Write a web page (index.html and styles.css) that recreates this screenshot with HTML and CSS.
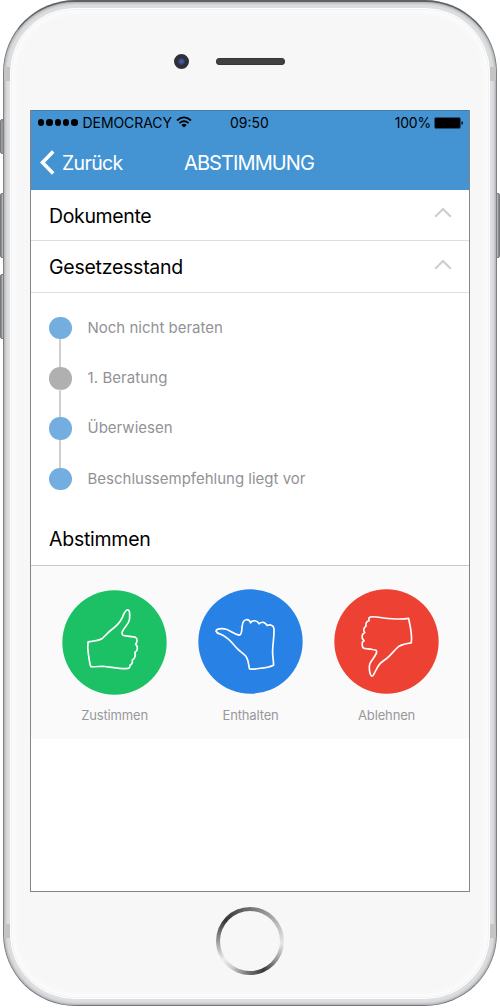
FILE: index.html
```html
<!DOCTYPE html>
<html lang="de">
<head>
<meta charset="utf-8">
<title>Abstimmung</title>
<link rel="stylesheet" href="styles.css">
</head>
<body>
<div class="device">
  <i class="key mute"></i><i class="key vol-up"></i><i class="key vol-down"></i><i class="key power"></i>
  <div class="shell">
    <i class="band tl"></i><i class="band tr"></i><i class="band bl"></i><i class="band br"></i>
    <div class="face">
      <div class="top-bezel"><i class="camera"></i><i class="speaker"></i></div>
      <main class="screen">
        <header class="header">
          <div class="status">
            <div class="carrier">
              <div class="signal"><i></i><i></i><i></i><i></i><i></i></div>
              <span class="carrier-name">DEMOCRACY</span>
              <svg class="wifi" viewBox="0 0 16 12" width="16" height="12"><g fill="none" stroke="#000" stroke-width="1.8"><path d="M1 4.5Q8-1.8 15 4.5"/><path d="M3.4 7.2Q8 3.1 12.6 7.2"/></g><path d="M5.3 9Q8 6.7 10.7 9L8 11.6z"/></svg>
            </div>
            <span class="clock">09:50</span>
            <div class="power-state"><span class="percent">100%</span><svg class="battery" viewBox="0 0 29 12" width="29" height="12"><rect x=".5" y=".5" width="26" height="11" rx="1.7" fill="#000" stroke="#235073"/><path d="M27.5 4Q29 4.4 29 6T27.5 8z"/></svg></div>
          </div>
          <nav class="nav">
            <svg class="back-icon" viewBox="0 0 15 25" width="15" height="25"><path d="M13.2 1.5 2.5 12.5l10.7 11" fill="none" stroke="#fff" stroke-width="3.6"/></svg>
            <span class="back">Zurück</span>
            <h1 class="title">ABSTIMMUNG</h1>
          </nav>
        </header>
        <section class="row"><h2 class="heading documents">Dokumente</h2><svg class="chevron" viewBox="0 0 18 11" width="18" height="11"><path d="M1.2 9.7 9 2l7.8 7.7"/></svg></section>
        <section class="row second"><h2 class="heading law">Gesetzesstand</h2><svg class="chevron" viewBox="0 0 18 11" width="18" height="11"><path d="M1.2 9.7 9 2l7.8 7.7"/></svg></section>
        <ol class="timeline">
          <li class="step"><i class="dot"></i><span class="step-name">Noch nicht beraten</span></li>
          <li class="step"><i class="dot muted"></i><span class="step-name reading">1. Beratung</span></li>
          <li class="step"><i class="dot"></i><span class="step-name">Überwiesen</span></li>
          <li class="step"><i class="dot"></i><span class="step-name">Beschlussempfehlung liegt vor</span></li>
        </ol>
        <div class="vote-title"><h2 class="heading vote">Abstimmen</h2></div>
        <section class="votes">
          <div class="choice yes">
            <svg class="hand" viewBox="37 29 314 314"><circle cx="194" cy="186" r="156" fill="#1bc164"/><path d="M115 184C132 182 146 181 156 175C166 167 174 156 185 148C200 137 211 126 218 110C222 99 228 89 233 88C240 88 240 103 239 115C238 129 222 143 217 154C214 164 220 166 233 167L256 170C263 173 263 184 257 191C265 198 264 210 255 216C258 226 254 234 247 239C249 246 246 251 240 254C242 262 236 265 226 264C204 264 182 259 159 257C146 257 135 260 123 258C118 244 116 223 114 202Z"/></svg>
            <span class="choice-name">Zustimmen</span>
          </div>
          <div class="choice">
            <svg class="hand" viewBox="25 26 314 314"><circle cx="182" cy="183" r="156" fill="#2882e5"/><path d="M79 152C80 145 92 144 104 145C119 147 132 161 148 164C157 163 155 151 157 138C158 127 160 119 169 118C176 117 180 121 182 127C187 118 202 119 208 130C216 122 226 125 232 135C240 131 251 135 252 144C254 160 249 186 248 212C248 228 251 240 251 254C238 260 225 262 211 263C199 266 190 266 179 265C176 251 176 240 170 230C165 221 153 215 144 206C134 196 126 184 115 175C105 167 98 163 90 160Q81 158 79 152Z"/></svg>
            <span class="choice-name abstain">Enthalten</span>
          </div>
          <div class="choice">
            <svg class="hand" viewBox="27 26 314 314"><circle cx="184" cy="183" r="156" fill="#ed4133"/><path d="M250 114C236 116 219 116 201 115C179 115 163 109 142 109C133 109 129 112 132 121C124 122 121 130 123 137C116 141 113 149 119 156C110 161 107 171 117 181C110 184 110 192 113 201C119 206 130 204 142 207C151 208 157 209 154 217C151 226 141 237 135 248C130 259 133 269 135 279C138 289 143 288 146 281C153 269 156 259 164 250C172 241 183 237 193 226C203 216 212 204 222 197C233 191 244 189 258 187C262 164 255 137 250 114Z"/></svg>
            <span class="choice-name reject">Ablehnen</span>
          </div>
        </section>
      </main>
      <div class="bottom-bezel"><i class="home"></i></div>
    </div>
  </div>
</div>
</body>
</html>
```
FILE: styles.css
```css
* { box-sizing: border-box; }
body { margin: 0; background: #fff; font-family: Inter, "Liberation Sans", sans-serif; color: #000; overflow: hidden; }
h1, h2, ol { margin: 0; padding: 0; font-weight: 400; list-style: none; }
svg { display: block; flex: none; }
span, h1, h2 { white-space: nowrap; }
.device { position: relative; width: 500px; height: 1008px; padding: 0 3px 2px; }
.shell { position: relative; height: 1006px; padding: 6px; border: 1px solid #808080; border-top: 2px solid #606163; border-bottom-color: #777780; border-radius: 72px; background: #dcdee0; box-shadow: inset 0 0 3px 1px #a4a7a9; }
.face { height: 100%; border: 1px solid #fff; border-radius: 65px; background: #f7f7f7; box-shadow: inset 0 0 0 1px #f1f1f1, inset 0 0 5px 4px #fcfcfc; display: flex; flex-direction: column; align-items: center; }
.key { position: absolute; background: linear-gradient(90deg, #777, #b9babd 45%, #77797c); border: 1px solid #77797c; border-radius: 2px; }
.mute { left: 0; top: 119px; width: 4px; height: 35px; }
.vol-up { left: 0; top: 193px; width: 5px; height: 65px; }
.vol-down { left: 0; top: 274px; width: 5px; height: 65px; }
.power { right: 0; top: 193px; width: 5px; height: 65px; }
.band { position: absolute; width: 6px; height: 14px; background: #c3c4c5; }
.tl { left: 0; top: 65px; } .tr { right: 0; top: 65px; }
.bl { left: 0; bottom: 67px; } .br { right: 0; bottom: 67px; }
.top-bezel { height: 101px; width: 100%; display: flex; gap: 27px; padding: 45px 0 0 163px; flex: none; }
.camera { width: 15px; height: 15px; border: 4px solid #303136; border-radius: 50%; background: radial-gradient(#5267a4, #1c2a5a); }
.speaker { width: 69px; height: 7px; margin-top: 4px; border-radius: 3px; background: #414143; border: 1px solid #363638; }
.screen { width: 440px; height: 782px; flex: none; border: 1px solid #858585; background: #fff; display: flex; flex-direction: column; }
.header { height: 79px; background: #4494d4; flex: none; box-shadow: 0 -1px #447ca9; }
.status { height: 24px; display: grid; grid-template-columns: 199px 1fr auto; align-items: center; font-size: 14px; padding: 0 6px 1px 7px; }
.carrier, .power-state { display: flex; align-items: center; }
.signal { display: flex; gap: 1.9px; margin-right: 5px; }
.signal i { width: 6.4px; height: 6.4px; border-radius: 50%; background: #000; }
.carrier-name { letter-spacing: -.07px; }
.wifi { margin-left: 4px; margin-bottom: 1px; }
.clock { margin-left: -7px; }
.percent { letter-spacing: -.2px; }
.battery { margin-left: 3px; }
.nav { height: 55px; display: flex; align-items: center; color: #fff; padding: 0 0 0 9px; font-size: 20px; }
.back { width: 60px; margin-left: 7px; font-size: 19.5px; letter-spacing: -.65px; }
.title { font-size: 20px; margin-left: 62px; letter-spacing: -.9px; }
.row { height: 51px; flex: none; display: flex; align-items: center; justify-content: space-between; padding: 0 17px 0 18px; border-bottom: 1px solid #dedede; }
.second { height: 52px; }
.heading { font-size: 19.5px; letter-spacing: -.25px; }
.documents { letter-spacing: -.35px; padding-top: 1px; }
.chevron { margin-bottom: 5px; }
.chevron path { fill: none; stroke: #ccced1; stroke-width: 2.2; }
.timeline { height: 220px; padding: 10px 0 0 18px; flex: none; }
.step { height: 50.3px; display: flex; align-items: center; gap: 16px; position: relative; }
.step:not(:last-child)::after { content: ""; position: absolute; left: 10px; top: 36px; width: 2px; height: 29px; background: #d0d0d1; }
.dot { width: 22.5px; height: 22.5px; border-radius: 50%; background: #74addf; }
.muted { background: #b0b0b0; }
.step-name { color: #929296; font-size: 15px; padding-bottom: 2px; }
.reading { letter-spacing: .08px; }
.vote-title { height: 53px; flex: none; display: flex; align-items: center; padding-left: 18px; border-bottom: 1px solid #cbcbcc; }
.votes { height: 173px; flex: none; background: #fafafa; display: flex; padding: 23px 0 0 15.6px; }
.choice { width: 136px; display: flex; flex-direction: column; align-items: center; }
.hand { width: 105px; height: 105px; }
.yes .hand { position: relative; top: 1px; }
.hand path { fill: none; stroke: #fff; stroke-width: 5; stroke-linejoin: round; }
.choice-name { color: #98989b; font-size: 13px; letter-spacing: -.15px; line-height: 16px; margin-top: 13px; }
.bottom-bezel { flex: 1; padding-top: 15px; }
.home { display: block; width: 68px; height: 68px; border-radius: 50%; padding: 4px; background: conic-gradient(#727272, #b5b7b6 55deg, #e7e7e7 95deg, #999 125deg, #393939 155deg, #777 185deg, #d0d0d0 215deg, #eee 235deg, #999 270deg, #333438 310deg, #727272); }
.home::before { content: ""; display: block; height: 100%; border-radius: 50%; background: #f7f7f7; }
```
